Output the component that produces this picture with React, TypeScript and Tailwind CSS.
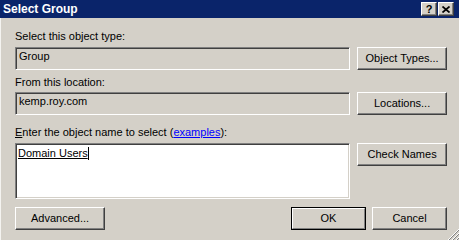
import clsx from 'clsx'
import type { ReactNode } from 'react'

// classic 3D frames
const raised =
  'border border-t-white border-l-white border-r-[#404040] border-b-[#404040] shadow-[inset_-1px_-1px_#808080]'
const sunken =
  'border border-t-[#808080] border-l-[#808080] border-r-white border-b-white'

function Btn({ children, className }: { children: ReactNode; className?: string }) {
  return (
    <div className={clsx('h-[23px] flex items-center justify-center bg-[#d4d0c8]', raised, className)}>
      {children}
    </div>
  )
}

function DefaultBtn({ children, className }: { children: ReactNode; className?: string }) {
  return (
    <div className={clsx('h-[23px] border border-black flex', className)}>
      <div className="flex-1 flex items-center justify-center border border-t-white border-l-white border-r-[#808080] border-b-[#808080]">
        {children}
      </div>
    </div>
  )
}

function Field({ children }: { children: ReactNode }) {
  return (
    <div className={clsx('h-[23px] w-[336px] pl-[3px] pt-[2px] bg-[#d4d0c8] shadow-[inset_1px_1px_#404040]', sunken)}>
      {children}
    </div>
  )
}

function TitleBtn({ children }: { children: ReactNode }) {
  return (
    <div className={clsx('w-[16px] h-[14px] bg-[#d4d0c8] flex items-center justify-center', raised)}>
      {children}
    </div>
  )
}

function Grip() {
  return (
    <svg width="12" height="12" viewBox="0 0 12 12" className="absolute right-0 bottom-0">
      {[1, 5, 9].map((o) => (
        <g key={o}>
          <line x1={12} y1={o} x2={o} y2={12} stroke="#ffffff" strokeWidth="1" />
          <line x1={12} y1={o + 1} x2={o + 1} y2={12} stroke="#808080" strokeWidth="1" />
        </g>
      ))}
    </svg>
  )
}

export default function App() {
  return (
    <div className="w-[459px] h-[240px] bg-[#d4d0c8] flex flex-col overflow-hidden font-['Liberation_Sans',Arial,sans-serif] text-[11px] leading-[13px] text-black">
      {/* title bar */}
      <div className="h-[18px] bg-[#0a246a] flex items-center justify-between pl-[3px] pr-[5px]">
        <span className="text-white font-bold text-[12px] leading-[14px]">Select Group</span>
        <div className="flex gap-[1px]">
          <TitleBtn>
            <span className="font-bold text-[11px] leading-[11px]">?</span>
          </TitleBtn>
          <TitleBtn>
            <svg width="8" height="7" viewBox="0 0 8 7">
              <path d="M0.5 0.5 L7.5 6.5 M7.5 0.5 L0.5 6.5" stroke="#000" strokeWidth="1.7" />
            </svg>
          </TitleBtn>
        </div>
      </div>

      <div className="flex-1 relative flex flex-col pl-[14px] pr-[12px] border-l border-[#f4f3f0]">
        <div className="mt-[12px]">Select this object type:</div>
        <div className="mt-[4px] flex gap-[7px]">
          <Field>Group</Field>
          <Btn className="w-[90px]">Object Types...</Btn>
        </div>

        <div className="mt-[6px]">From this location:</div>
        <div className="mt-[3px] flex gap-[7px]">
          <Field>kemp.roy.com</Field>
          <Btn className="w-[90px]">Locations...</Btn>
        </div>

        <div className="mt-[11px]">
          <span className="underline">E</span>nter the object name to select (
          <span className="underline text-[#0000ff]">examples</span>):
        </div>
        <div className="mt-[4px] flex gap-[7px] items-start">
          <div
            className={clsx(
              'h-[56px] w-[336px] bg-white pl-[2px] pt-[3px] shadow-[inset_1px_1px_#404040,inset_-1px_-1px_#d4d0c8]',
              sunken,
            )}
          >
            <span className="underline">Domain Users</span>
            <span className="inline-block w-px h-[13px] bg-black align-top" />
          </div>
          <Btn className="w-[90px]">Check Names</Btn>
        </div>

        <div className="mt-[8px] flex justify-between">
          <Btn className="w-[90px]">Advanced...</Btn>
          <div className="flex gap-[6px]">
            <DefaultBtn className="w-[75px]">OK</DefaultBtn>
            <Btn className="w-[75px]">Cancel</Btn>
          </div>
        </div>

        <Grip />
      </div>
    </div>
  )
}
